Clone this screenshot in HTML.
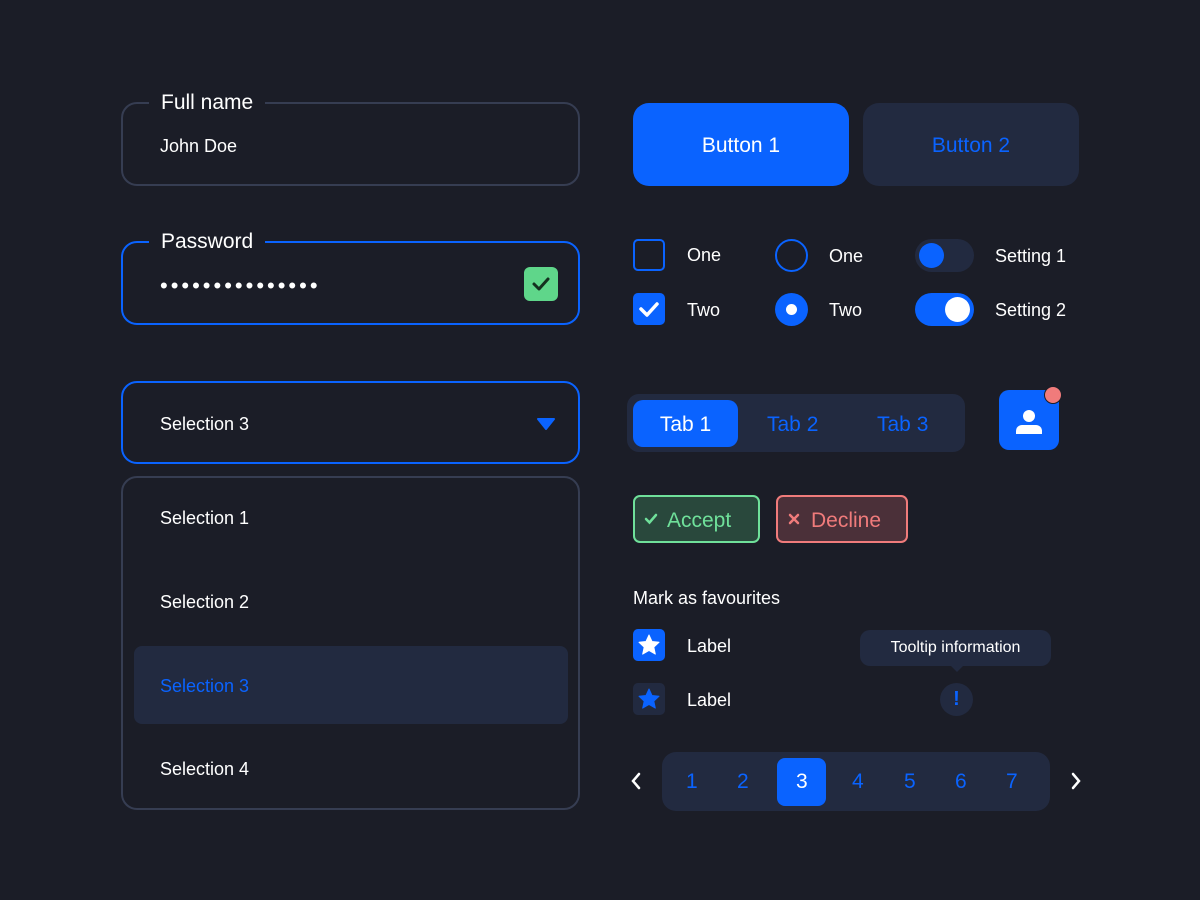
<!DOCTYPE html><html><head><style>
*{margin:0;padding:0;box-sizing:border-box}
body{width:1200px;height:900px;background:#1b1d27;font-family:"Liberation Sans",sans-serif;color:#fff;position:relative;overflow:hidden}
.a{position:absolute}
.box{position:absolute;border-radius:16px;border:2px solid #363d52}
.lbl{position:absolute;background:#1b1d27;padding:0 12px;font-size:21px;top:-13px;left:26px;line-height:24px}
.t{position:absolute;font-size:18px;line-height:20px}
.blue{color:#0a63ff}
</style></head><body>
<div class="box" style="left:121px;top:102px;width:459px;height:84px"><div class="lbl">Full name</div><div class="t" style="left:37px;top:32px">John Doe</div></div>
<div class="box" style="left:121px;top:241px;width:459px;height:84px;border-color:#0a63ff"><div class="lbl">Password</div>
<div class="t" style="left:37px;top:33px;font-size:22px;letter-spacing:3px">•••••••••••••••</div>
<div class="a" style="left:401px;top:24px;width:34px;height:34px;background:#5fd68a;border-radius:6px"><svg width="34" height="34"><path d="M10 17l5 5 9-10" stroke="#14301f" stroke-width="3" fill="none" stroke-linecap="round" stroke-linejoin="round"/></svg></div></div>
<div class="box" style="left:121px;top:381px;width:459px;height:83px;border-color:#0a63ff"><div class="t" style="left:37px;top:31px">Selection 3</div>
<svg class="a" style="left:414px;top:35px" width="18" height="12"><path d="M1 1h16l-8 10z" fill="#0a63ff" stroke="#0a63ff" stroke-linejoin="round" stroke-width="2"/></svg></div>
<div class="box" style="left:121px;top:476px;width:459px;height:334px">
<div class="t" style="left:37px;top:30px">Selection 1</div>
<div class="t" style="left:37px;top:114px">Selection 2</div>
<div class="a" style="left:11px;top:168px;width:434px;height:78px;background:#222a40;border-radius:8px"></div>
<div class="t blue" style="left:37px;top:198px">Selection 3</div>
<div class="t" style="left:37px;top:281px">Selection 4</div></div>

<div class="a" style="left:633px;top:103px;width:216px;height:83px;background:#0a63ff;border-radius:16px;font-size:21px;text-align:center;line-height:86px">Button 1</div>
<div class="a blue" style="left:863px;top:103px;width:216px;height:83px;background:#222a40;border-radius:16px;font-size:21px;text-align:center;line-height:86px">Button 2</div>

<div class="a" style="left:633px;top:239px;width:32px;height:32px;border:2px solid #0a63ff;border-radius:5px"></div>
<div class="a" style="left:633px;top:293px;width:32px;height:32px;background:#0a63ff;border-radius:5px"><svg width="32" height="32"><path d="M8 16l6 6 10-11" stroke="#fff" stroke-width="3.5" fill="none" stroke-linecap="round" stroke-linejoin="round"/></svg></div>
<div class="t" style="left:687px;top:245px">One</div><div class="t" style="left:687px;top:300px">Two</div>
<div class="a" style="left:775px;top:239px;width:33px;height:33px;border:2px solid #0a63ff;border-radius:50%"></div>
<div class="a" style="left:775px;top:293px;width:33px;height:33px;background:#0a63ff;border-radius:50%"><div class="a" style="left:11px;top:11px;width:11px;height:11px;background:#fff;border-radius:50%"></div></div>
<div class="t" style="left:829px;top:246px">One</div><div class="t" style="left:829px;top:300px">Two</div>
<div class="a" style="left:915px;top:239px;width:59px;height:33px;background:#222a40;border-radius:17px"><div class="a" style="left:4px;top:4px;width:25px;height:25px;background:#0a63ff;border-radius:50%"></div></div>
<div class="a" style="left:915px;top:293px;width:59px;height:33px;background:#0a63ff;border-radius:17px"><div class="a" style="left:30px;top:4px;width:25px;height:25px;background:#fff;border-radius:50%"></div></div>
<div class="t" style="left:995px;top:246px">Setting 1</div><div class="t" style="left:995px;top:300px">Setting 2</div>

<div class="a" style="left:627px;top:394px;width:338px;height:58px;background:#222a40;border-radius:12px"></div>
<div class="a" style="left:633px;top:400px;width:105px;height:47px;background:#0a63ff;border-radius:10px;font-size:21px;text-align:center;line-height:49px">Tab 1</div>
<div class="a blue" style="left:767px;top:400px;font-size:21px;line-height:49px">Tab 2</div>
<div class="a blue" style="left:877px;top:400px;font-size:21px;line-height:49px">Tab 3</div>
<div class="a" style="left:999px;top:390px;width:60px;height:60px;background:#0a63ff;border-radius:10px"><svg width="60" height="60"><circle cx="30" cy="26" r="6" fill="#fff"/><path d="M17 44v-3a6 6 0 0 1 6-6h14a6 6 0 0 1 6 6v3z" fill="#fff"/></svg></div>
<div class="a" style="left:1044px;top:386px;width:18px;height:18px;background:#f07b7b;border-radius:50%;border:1px solid #1b1d27"></div>

<div class="a" style="left:633px;top:495px;width:127px;height:48px;background:#29483c;border:2px solid #6fe09a;border-radius:7px;color:#6fe09a;font-size:21px;line-height:48px;padding-left:32px">Accept<svg class="a" style="left:9px;top:16px" width="14" height="12"><path d="M2 6l3.5 3.5L12 2" stroke="#6fe09a" stroke-width="2.5" fill="none" stroke-linecap="round"/></svg></div>
<div class="a" style="left:776px;top:495px;width:132px;height:48px;background:#4b3039;border:2px solid #f07b7b;border-radius:7px;color:#f07b7b;font-size:21px;line-height:48px;padding-left:33px">Decline<svg class="a" style="left:10px;top:16px" width="12" height="12"><path d="M2 2l8 8M10 2l-8 8" stroke="#f07b7b" stroke-width="2.5" stroke-linecap="round"/></svg></div>

<div class="t" style="left:633px;top:588px">Mark as favourites</div>
<div class="a" style="left:633px;top:629px;width:32px;height:32px;background:#0a63ff;border-radius:5px"><svg width="32" height="32"><path d="M16 6l3 6.5 7 .8-5.2 4.8 1.5 7L16 21.5 9.7 25.1l1.5-7L6 13.3l7-.8z" fill="#fff" stroke="#fff" stroke-linejoin="round"/></svg></div>
<div class="a" style="left:633px;top:683px;width:32px;height:32px;background:#222a40;border-radius:5px"><svg width="32" height="32"><path d="M16 6l3 6.5 7 .8-5.2 4.8 1.5 7L16 21.5 9.7 25.1l1.5-7L6 13.3l7-.8z" fill="#0a63ff" stroke="#0a63ff" stroke-linejoin="round"/></svg></div>
<div class="t" style="left:687px;top:636px">Label</div><div class="t" style="left:687px;top:690px">Label</div>
<div class="a" style="left:860px;top:630px;width:191px;height:36px;background:#222a40;border-radius:10px;font-size:16px;text-align:center;line-height:36px">Tooltip information</div>
<div class="a" style="left:950px;top:665px;width:0;height:0;border-left:7px solid transparent;border-right:7px solid transparent;border-top:7px solid #222a40"></div>
<div class="a" style="left:940px;top:683px;width:33px;height:33px;background:#222a40;border-radius:50%;color:#0a63ff;font-weight:bold;font-size:20px;text-align:center;line-height:33px">!</div>

<svg class="a" style="left:629px;top:772px" width="14" height="18"><path d="M10 2L4 9l6 7" stroke="#fff" stroke-width="2.5" fill="none" stroke-linecap="round"/></svg>
<svg class="a" style="left:1069px;top:772px" width="14" height="18"><path d="M4 2l6 7-6 7" stroke="#fff" stroke-width="2.5" fill="none" stroke-linecap="round"/></svg>
<div class="a" style="left:662px;top:752px;width:388px;height:59px;background:#222a40;border-radius:14px"></div>
<div class="a" style="left:777px;top:758px;width:49px;height:48px;background:#0a63ff;border-radius:8px"></div>
<div class="a blue" style="left:662px;top:752px;width:388px;height:59px;font-size:21px;line-height:59px">
<span class="a" style="left:24px">1</span><span class="a" style="left:75px">2</span><span class="a" style="left:134px;color:#fff">3</span><span class="a" style="left:190px">4</span><span class="a" style="left:242px">5</span><span class="a" style="left:293px">6</span><span class="a" style="left:344px">7</span></div>
</body></html>
